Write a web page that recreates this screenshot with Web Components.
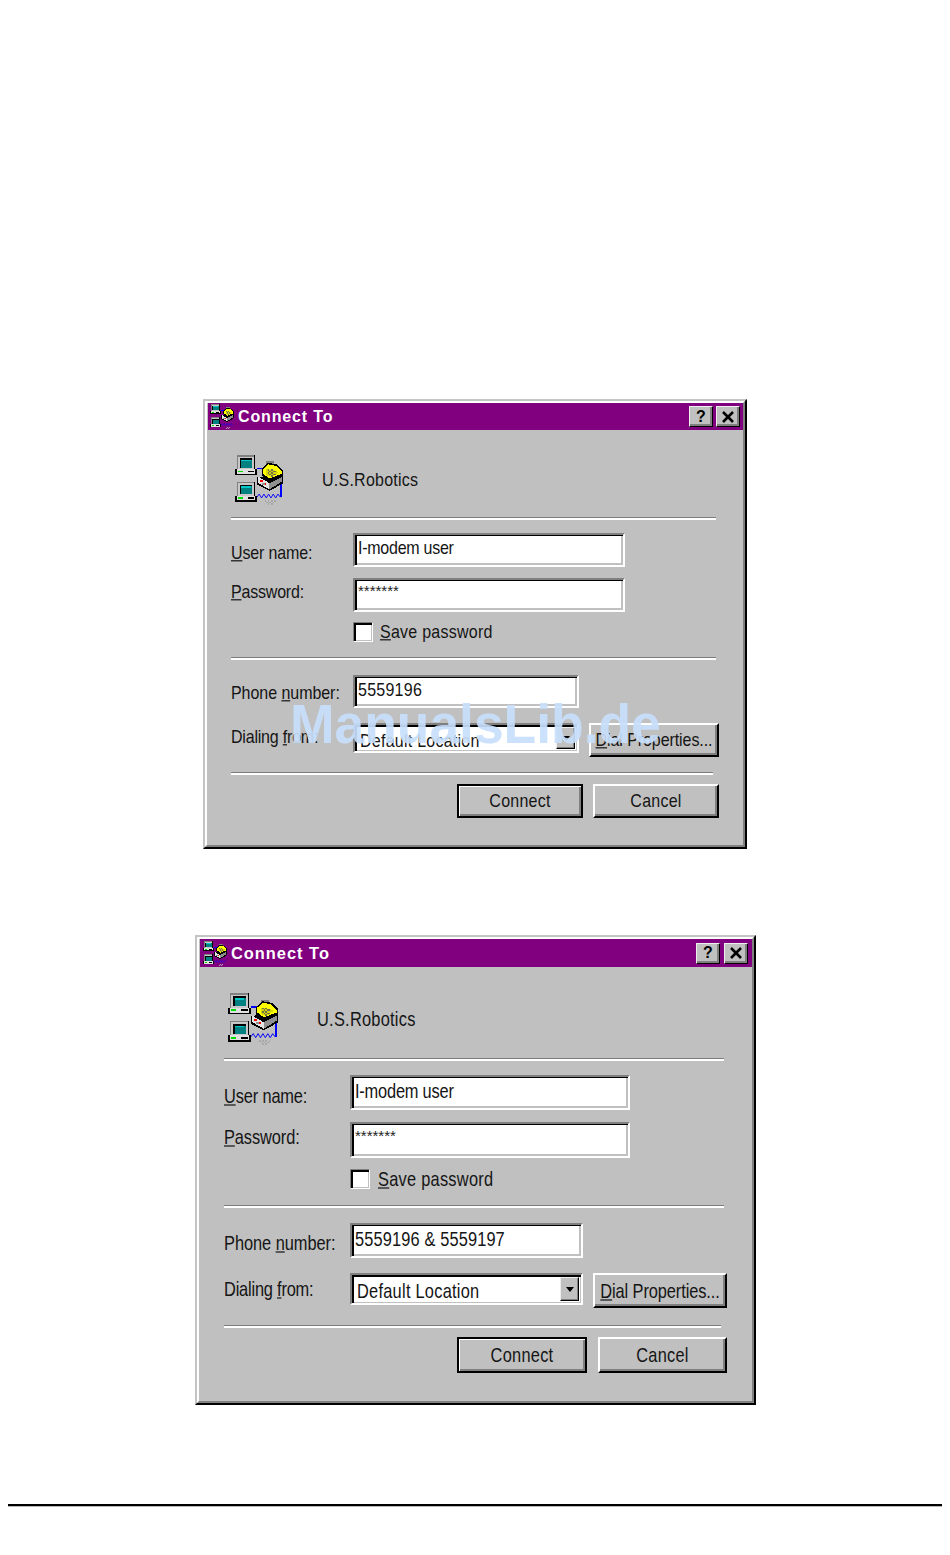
<!DOCTYPE html>
<html>
<head>
<meta charset="utf-8">
<title>Connect To</title>
<style>
  html, body { margin: 0; padding: 0; background: #fff; }
  body { position: relative; height: 1555px; overflow: hidden; padding-top: 399px; box-sizing: border-box; }
  #first {
    margin-left: 203px; width: 544px;
    --body-left: 23px; --body-bottom: 27px; --title-h: 27px; --title-left: 2px; --title-right: 3px;
    --title-gap: 3px; --fs: 16px; --ls: .25px; --title-fs: 16px; --title-ls: .85px; --label-w: 122px;
  }
  #second {
    margin-left: 195px; margin-top: 86px; width: 561px;
    --body-left: 24px; --body-bottom: 28px; --title-h: 28px; --title-left: 3px; --title-right: 4px;
    --title-gap: 4px; --fs: 16.4px; --ls: .25px; --title-fs: 16.4px; --title-ls: 1px; --label-w: 126px;
  }
</style>
</head>
<body>

<win-dialog id="first" heading="Connect To">
  <win-header style="margin-top:25px;height:50px" size="50"><win-text>U.S.Robotics</win-text></win-header>
  <win-sep style="margin-top:12px;width:485px"></win-sep>
  <win-row style="margin-top:13px" pad="10">
    <win-text slot="label" style="--ls:-.15px"><u>U</u>ser name:</win-text>
    <win-field style="width:272px;height:34px;--tp:3px;--tl:3px"><win-text style="--ls:-.25px">I-modem user</win-text></win-field>
  </win-row>
  <win-row style="margin-top:11px" pad="4">
    <win-text slot="label" style="--ls:-.2px"><u>P</u>assword:</win-text>
    <win-field style="width:272px;height:34px;--tp:1px;--tl:3px"><win-stars>*******</win-stars></win-field>
  </win-row>
  <win-check style="margin-top:10px;margin-left:122px;height:20px;--check-gap:7px"><win-text><u>S</u>ave password</win-text></win-check>
  <win-sep style="margin-top:15px;width:485px"></win-sep>
  <win-row style="margin-top:15px" pad="8">
    <win-text slot="label" style="--ls:-.05px">Phone <u>n</u>umber:</win-text>
    <win-field style="width:226px;height:33px;--tp:3px;--tl:3px"><win-text>5559196</win-text></win-field>
  </win-row>
  <win-row style="margin-top:15px" pad="4">
    <win-text slot="label" style="--ls:-.2px">Dialing <u>f</u>rom:</win-text>
    <win-select style="width:226px;height:30px;--tp:4px;--tl:5px;--arrow-w:19px"><win-text>Default Location</win-text></win-select>
    <win-button style="width:130px;height:34px;margin-left:10px"><win-text style="--ls:-.08px"><u>D</u>ial Properties...</win-text></win-button>
  </win-row>
  <win-sep style="margin-top:15px;width:482px"></win-sep>
  <win-actions style="margin-top:9px;width:488px;--btn-gap:10px">
    <win-button default style="width:126px;height:34px"><win-text>Connect</win-text></win-button>
    <win-button style="width:126px;height:34px"><win-text>Cancel</win-text></win-button>
  </win-actions>
</win-dialog>

<win-dialog id="second" heading="Connect To">
  <win-header style="margin-top:26px;height:52px" size="52"><win-text>U.S.Robotics</win-text></win-header>
  <win-sep style="margin-top:13px;width:500px"></win-sep>
  <win-row style="margin-top:14px" pad="11">
    <win-text slot="label" style="--ls:-.15px"><u>U</u>ser name:</win-text>
    <win-field style="width:280px;height:35px;--tp:4px;--tl:3px"><win-text style="--ls:-.2px">I-modem user</win-text></win-field>
  </win-row>
  <win-row style="margin-top:12px" pad="5">
    <win-text slot="label" style="--ls:-.1px"><u>P</u>assword:</win-text>
    <win-field style="width:280px;height:36px;--tp:2px;--tl:3px"><win-stars>*******</win-stars></win-field>
  </win-row>
  <win-check style="margin-top:11px;margin-left:126px;height:20px;--check-gap:8px"><win-text><u>S</u>ave password</win-text></win-check>
  <win-sep style="margin-top:16px;width:500px"></win-sep>
  <win-row style="margin-top:15px" pad="10">
    <win-text slot="label" style="--ls:-.05px">Phone <u>n</u>umber:</win-text>
    <win-field style="width:233px;height:35px;--tp:4px;--tl:3px"><win-text style="--ls:.13px">5559196 &amp; 5559197</win-text></win-field>
  </win-row>
  <win-row style="margin-top:15px" pad="6">
    <win-text slot="label" style="--ls:-.2px">Dialing <u>f</u>rom:</win-text>
    <win-select style="width:233px;height:32px;--tp:4px;--tl:5px;--arrow-w:19px"><win-text>Default Location</win-text></win-select>
    <win-button style="width:134px;height:35px;margin-left:10px"><win-text style="--ls:-.1px"><u>D</u>ial Properties...</win-text></win-button>
  </win-row>
  <win-sep style="margin-top:17px;width:497px"></win-sep>
  <win-actions style="margin-top:9px;width:503px;--btn-gap:11px">
    <win-button default style="width:130px;height:36px"><win-text>Connect</win-text></win-button>
    <win-button style="width:129px;height:36px"><win-text>Cancel</win-text></win-button>
  </win-actions>
</win-dialog>

<page-rule></page-rule>
<water-mark>ManualsLib.de</water-mark>

<script>
const netIconTemplate = document.createElement('template');
netIconTemplate.innerHTML = `
  <style>
    :host { display: block; flex: none; line-height: 0; }
    svg { display: block; width: 100%; height: 100%; }
  </style>
  <svg viewBox="0 0 32 32" preserveAspectRatio="none" shape-rendering="crispEdges">
    <defs>
      <g id="pc">
        <rect x="1" y="0" width="12" height="9" fill="#000"/>
        <rect x="1" y="0" width="11" height="9" fill="#808080"/>
        <rect x="2" y="1" width="10" height="8" fill="#c8c8c8"/>
        <rect x="3" y="2" width="8" height="6" fill="#000"/>
        <rect x="4" y="3" width="7" height="5" fill="#008080"/>
        <rect x="4" y="3" width="6" height="1" fill="#00c8c8"/>
        <rect x="0" y="9" width="14" height="4" fill="#000"/>
        <rect x="1" y="9" width="12" height="3" fill="#e0e0e0"/>
        <rect x="2" y="10" width="3" height="1" fill="#00e000"/>
        <rect x="8" y="10" width="4" height="1" fill="#000"/>
      </g>
    </defs>
    <!-- blue wiring -->
    <rect x="14" y="8" width="4" height="1" fill="#0000ff"/>
    <rect x="29" y="17" width="1" height="10" fill="#0000ff"/>
    <path d="M14 27 L15.5 25 L17 27.5 L18.5 25 L20 27.5 L21.5 25 L23 27.5 L24.5 25 L26 27.5 L27.5 25 L29 27" fill="none" stroke="#0000ff" stroke-width=".6" shape-rendering="auto"/>
    <use href="#pc" x="0" y="0"/>
    <use href="#pc" x="0" y="17"/>
    <!-- phone base -->
    <polygon points="14,14 31,13 31,18 22,23 14,19" fill="#000"/>
    <polygon points="15,14 22,18 22,22 15,18" fill="#e4e4e4"/>
    <polygon points="22,18 30,14 30,17 22,22" fill="#909090"/>
    <rect x="16" y="16" width="2" height="1" fill="#ff0000"/>
    <rect x="19" y="18" width="1" height="1" fill="#ff0000"/>
    <rect x="17" y="18" width="2" height="1" fill="#909090"/>
    <!-- handset -->
    <rect x="20" y="4" width="5" height="2" fill="#808080"/>
    <polygon points="17,9 21,5 27,6 31,10 31,13 22,16 17,13" fill="#000"/>
    <polygon points="18,9 21.5,6 26.5,7 30,10.5 30,12 22,15 18,12" fill="#ffff00"/>
    <polygon points="20,9 26,10 28,11 24,14 20,13" fill="#d8d800"/>
    <g fill="#707050">
      <rect x="21" y="9" width="1" height="1"/><rect x="23" y="9" width="1" height="1"/><rect x="25" y="10" width="1" height="1"/>
      <rect x="22" y="10" width="1" height="1"/><rect x="24" y="10" width="1" height="1"/>
      <rect x="21" y="11" width="1" height="1"/><rect x="23" y="11" width="1" height="1"/><rect x="25" y="12" width="1" height="1"/>
      <rect x="22" y="12" width="1" height="1"/><rect x="24" y="12" width="1" height="1"/>
      <rect x="23" y="13" width="1" height="1"/>
    </g>
    <!-- shadow dither -->
    <g fill="#a8a8a8">
      <rect x="19" y="29" width="1" height="1"/><rect x="21" y="29" width="1" height="1"/><rect x="23" y="29" width="1" height="1"/><rect x="25" y="29" width="1" height="1"/>
      <rect x="20" y="30" width="1" height="1"/><rect x="22" y="30" width="1" height="1"/><rect x="24" y="30" width="1" height="1"/>
      <rect x="21" y="31" width="1" height="1"/><rect x="23" y="31" width="1" height="1"/>
    </g>
  </svg>
`;
class NetIcon extends HTMLElement {
  constructor() {
    super();
    this.attachShadow({mode: 'open'}).appendChild(netIconTemplate.content.cloneNode(true));
  }
}

const winTextTemplate = document.createElement('template');
winTextTemplate.innerHTML = `
  <style>
    :host {
      display: inline-block;
      font: 400 var(--fs, 16px)/20px "Liberation Sans", Arial, sans-serif;
      letter-spacing: var(--ls, 0);
      color: #151515;
      white-space: nowrap;
      transform: scaleY(1.2);
    }
  </style>
  <slot></slot>
`;
class WinText extends HTMLElement {
  constructor() {
    super();
    this.attachShadow({mode: 'open'}).appendChild(winTextTemplate.content.cloneNode(true));
  }
}

const winStarsTemplate = document.createElement('template');
winStarsTemplate.innerHTML = `
  <style>
    :host {
      display: inline-block;
      font: 400 15px/20px "Liberation Sans", Arial, sans-serif;
      color: #222;
      white-space: nowrap;
    }
  </style>
  <slot></slot>
`;
class WinStars extends HTMLElement {
  constructor() {
    super();
    this.attachShadow({mode: 'open'}).appendChild(winStarsTemplate.content.cloneNode(true));
  }
}

const winDialogTemplate = document.createElement('template');
winDialogTemplate.innerHTML = `
  <style>
    :host {
      display: block;
      box-sizing: border-box;
      border: 2px solid;
      border-color: #c4c4c4 #000 #000 #c4c4c4;
      background: #c0c0c0;
    }
    .frame {
      border: 2px solid;
      border-color: #fff #808080 #808080 #fff;
      padding-left: 1px;
    }
    .bar {
      display: flex;
      align-items: center;
      height: var(--title-h);
      background: #800080;
      padding: 0 var(--title-right) 0 var(--title-left);
    }
    .bar net-icon { width: 25px; height: 25px; }
    .bar h1 {
      margin: 0 0 0 3px;
      flex: 1;
      font: 700 var(--title-fs)/20px "Liberation Sans", Arial, sans-serif;
      letter-spacing: var(--title-ls);
      color: #fff;
    }
    .tools { display: flex; gap: var(--title-gap); }
    .tool {
      box-sizing: border-box;
      width: 24px;
      height: 21px;
      display: flex;
      align-items: center;
      justify-content: center;
      background: #c0c0c0;
      border: 1px solid;
      border-color: #eee #000 #000 #eee;
      box-shadow: inset -2px -2px 0 #808080;
      font: 700 16px/16px "Liberation Sans", Arial, sans-serif;
      color: #000;
    }
    .body { padding: 0 0 var(--body-bottom) var(--body-left); }
  </style>
  <div class="frame">
    <div class="bar">
      <net-icon></net-icon>
      <h1 id="heading"></h1>
      <div class="tools">
        <div class="tool">?</div>
        <div class="tool">
          <svg width="14" height="12" viewBox="0 0 14 12"><path d="M2 1 L12 11 M12 1 L2 11" stroke="#000" stroke-width="2.6" fill="none"/></svg>
        </div>
      </div>
    </div>
    <div class="body"><slot></slot></div>
  </div>
`;
class WinDialog extends HTMLElement {
  constructor() {
    super();
    this.attachShadow({mode: 'open'}).appendChild(winDialogTemplate.content.cloneNode(true));
  }
  connectedCallback() {
    this.shadowRoot.querySelector('#heading').textContent = this.getAttribute('heading');
  }
}

const winHeaderTemplate = document.createElement('template');
winHeaderTemplate.innerHTML = `
  <style>
    :host { display: flex; align-items: center; padding-left: 4px; }
    net-icon { margin-right: 37px; }
  </style>
  <net-icon></net-icon>
  <slot></slot>
`;
class WinHeader extends HTMLElement {
  constructor() {
    super();
    this.attachShadow({mode: 'open'}).appendChild(winHeaderTemplate.content.cloneNode(true));
  }
  connectedCallback() {
    const size = this.getAttribute('size') + 'px';
    const icon = this.shadowRoot.querySelector('net-icon');
    icon.style.width = size;
    icon.style.height = size;
  }
}

const winSepTemplate = document.createElement('template');
winSepTemplate.innerHTML = `
  <style>
    :host {
      display: block;
      height: 3px;
      background: linear-gradient(#7c7c7c 0 45%, #fff 45% 100%);
    }
  </style>
`;
class WinSep extends HTMLElement {
  constructor() {
    super();
    this.attachShadow({mode: 'open'}).appendChild(winSepTemplate.content.cloneNode(true));
  }
}

const winRowTemplate = document.createElement('template');
winRowTemplate.innerHTML = `
  <style>
    :host { display: flex; align-items: flex-start; }
    .label { flex: none; width: var(--label-w); box-sizing: border-box; }
  </style>
  <div class="label"><slot name="label"></slot></div>
  <slot></slot>
`;
class WinRow extends HTMLElement {
  constructor() {
    super();
    this.attachShadow({mode: 'open'}).appendChild(winRowTemplate.content.cloneNode(true));
  }
  connectedCallback() {
    this.shadowRoot.querySelector('.label').style.paddingTop = (this.getAttribute('pad') || 0) + 'px';
  }
}

const winFieldTemplate = document.createElement('template');
winFieldTemplate.innerHTML = `
  <style>
    :host {
      display: block;
      flex: none;
      box-sizing: border-box;
      background: #fff;
      border: 2px solid;
      border-color: #808080 #fff #fff #808080;
      box-shadow: inset 2px 1px 0 #000, inset -2px -2px 0 #c0c0c0;
      padding: var(--tp, 3px) 0 0 var(--tl, 3px);
      overflow: hidden;
    }
  </style>
  <slot></slot>
`;
class WinField extends HTMLElement {
  constructor() {
    super();
    this.attachShadow({mode: 'open'}).appendChild(winFieldTemplate.content.cloneNode(true));
  }
}

const winSelectTemplate = document.createElement('template');
winSelectTemplate.innerHTML = `
  <style>
    :host {
      display: flex;
      flex: none;
      box-sizing: border-box;
      background: #fff;
      border: 2px solid;
      border-color: #808080 #fff #fff #808080;
      box-shadow: inset 2px 2px 0 #000, inset -1px -1px 0 #c0c0c0;
      padding: 2px 2px 2px 0;
    }
    .value { flex: 1; padding: var(--tp, 4px) 0 0 var(--tl, 5px); box-sizing: border-box; overflow: hidden; }
    .arrow {
      box-sizing: border-box;
      flex: none;
      width: var(--arrow-w, 19px);
      display: flex;
      align-items: center;
      justify-content: center;
      background: #c0c0c0;
      border: 1px solid;
      border-color: #eee #000 #000 #eee;
      box-shadow: inset -1px -1px 0 #808080;
    }
    .arrow i { border: 4px solid transparent; border-top: 5px solid #000; border-bottom: 0; }
  </style>
  <div class="value"><slot></slot></div>
  <div class="arrow"><i></i></div>
`;
class WinSelect extends HTMLElement {
  constructor() {
    super();
    this.attachShadow({mode: 'open'}).appendChild(winSelectTemplate.content.cloneNode(true));
  }
}

const winCheckTemplate = document.createElement('template');
winCheckTemplate.innerHTML = `
  <style>
    :host { display: flex; align-items: center; gap: var(--check-gap, 7px); }
    .box {
      box-sizing: border-box;
      flex: none;
      width: 20px;
      height: 20px;
      background: #fff;
      border: 1px solid;
      border-color: #808080 #fff #fff #808080;
      box-shadow: inset 2px 2px 0 #000, inset -1px -1px 0 #c0c0c0;
    }
  </style>
  <div class="box"></div>
  <slot></slot>
`;
class WinCheck extends HTMLElement {
  constructor() {
    super();
    this.attachShadow({mode: 'open'}).appendChild(winCheckTemplate.content.cloneNode(true));
  }
}

const winButtonTemplate = document.createElement('template');
winButtonTemplate.innerHTML = `
  <style>
    :host {
      display: flex;
      flex: none;
      align-items: center;
      justify-content: center;
      box-sizing: border-box;
      background: #c0c0c0;
      border: 2px solid;
      border-color: #fff #000 #000 #fff;
      box-shadow: inset -2px -2px 0 #808080;
    }
    :host([default]) {
      border-color: #000;
      box-shadow: inset 1px 1px 0 #fff, inset -2px -2px 0 #808080;
    }
  </style>
  <slot></slot>
`;
class WinButton extends HTMLElement {
  constructor() {
    super();
    this.attachShadow({mode: 'open'}).appendChild(winButtonTemplate.content.cloneNode(true));
  }
}

const winActionsTemplate = document.createElement('template');
winActionsTemplate.innerHTML = `
  <style>
    :host { display: flex; justify-content: flex-end; gap: var(--btn-gap, 10px); }
  </style>
  <slot></slot>
`;
class WinActions extends HTMLElement {
  constructor() {
    super();
    this.attachShadow({mode: 'open'}).appendChild(winActionsTemplate.content.cloneNode(true));
  }
}

const pageRuleTemplate = document.createElement('template');
pageRuleTemplate.innerHTML = `
  <style>
    :host {
      display: block;
      margin: 99px 8px 0;
      height: 3px;
      background: linear-gradient(#000 0 67%, #b8b8b8 67% 100%);
    }
  </style>
`;
class PageRule extends HTMLElement {
  constructor() {
    super();
    this.attachShadow({mode: 'open'}).appendChild(pageRuleTemplate.content.cloneNode(true));
  }
}

const waterMarkTemplate = document.createElement('template');
waterMarkTemplate.innerHTML = `
  <style>
    :host {
      position: absolute;
      left: 290px;
      top: 695px;
      font: 700 53.4px/60px "Liberation Sans", Arial, sans-serif;
      color: rgba(200, 224, 252, .92);
      white-space: nowrap;
      pointer-events: none;
      transform: scaleY(1.05);
      transform-origin: 50% 80%;
    }
  </style>
  <slot></slot>
`;
class WaterMark extends HTMLElement {
  constructor() {
    super();
    this.attachShadow({mode: 'open'}).appendChild(waterMarkTemplate.content.cloneNode(true));
  }
}

window.customElements.define('net-icon', NetIcon);
window.customElements.define('win-text', WinText);
window.customElements.define('win-stars', WinStars);
window.customElements.define('win-dialog', WinDialog);
window.customElements.define('win-header', WinHeader);
window.customElements.define('win-sep', WinSep);
window.customElements.define('win-row', WinRow);
window.customElements.define('win-field', WinField);
window.customElements.define('win-select', WinSelect);
window.customElements.define('win-check', WinCheck);
window.customElements.define('win-button', WinButton);
window.customElements.define('win-actions', WinActions);
window.customElements.define('page-rule', PageRule);
window.customElements.define('water-mark', WaterMark);
</script>
</body>
</html>
